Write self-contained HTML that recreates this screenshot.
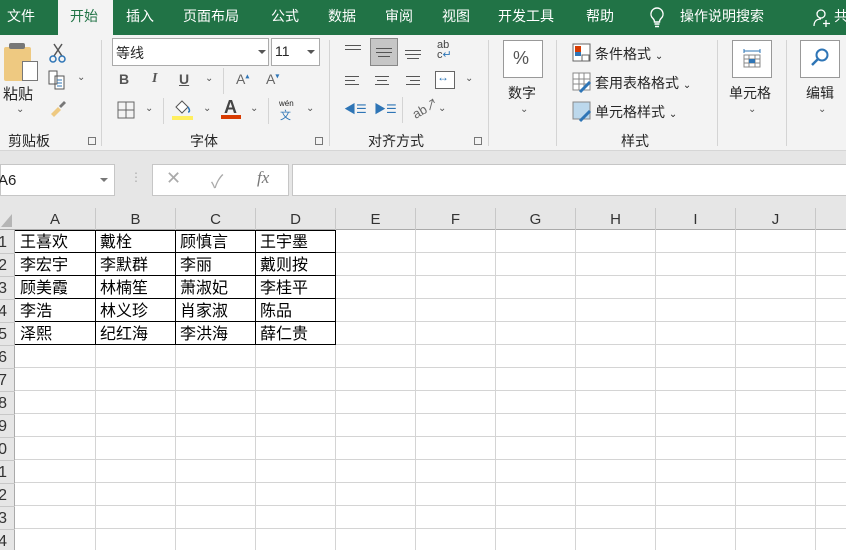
<!DOCTYPE html>
<html><head><meta charset="utf-8"><style>
*{margin:0;padding:0;box-sizing:border-box}
body{width:846px;height:550px;overflow:hidden;position:relative;background:#fff;font-family:"Liberation Sans","Noto Sans CJK SC",sans-serif;color:#262626}
.a{position:absolute}
.tab{position:absolute;top:0;height:35px;line-height:32px;color:#fff;font-size:14px}
.t{position:absolute;font-size:14px;white-space:nowrap}
.vs{position:absolute;width:1px;background:#d4d4d4}
.car{position:absolute;font-size:10px;color:#555}
.line{position:absolute;height:1px;background:#555}
.ch{position:absolute;top:208px;height:22px;font-size:15px;text-align:center;line-height:24px;color:#333;border-right:1px solid #c8c8c8}
.cell{position:absolute;font-size:16px;line-height:22px;color:#000}
</style></head><body>
<div class="a" style="left:0;top:0;width:846px;height:35px;background:#217346"></div>
<div class="a" style="left:58px;top:0;width:55px;height:35px;background:#f3f3f3"></div>
<div class="tab" style="left:7px">文件</div>
<div class="tab" style="left:70px;color:#217346">开始</div>
<div class="tab" style="left:126px">插入</div>
<div class="tab" style="left:183px">页面布局</div>
<div class="tab" style="left:271px">公式</div>
<div class="tab" style="left:328px">数据</div>
<div class="tab" style="left:385px">审阅</div>
<div class="tab" style="left:442px">视图</div>
<div class="tab" style="left:498px">开发工具</div>
<div class="tab" style="left:586px">帮助</div>
<svg class="a" style="left:648px;top:6px" width="18" height="22"><path d="M9 2a6 6 0 0 0-4 10.5c1 1 1.5 2 1.5 3.5h5c0-1.5.5-2.5 1.5-3.5A6 6 0 0 0 9 2zM6.5 18h5M7 20.5h4" stroke="#fff" stroke-width="1.4" fill="none"/></svg>
<div class="tab" style="left:680px">操作说明搜索</div>
<svg class="a" style="left:813px;top:8px" width="20" height="20"><circle cx="8" cy="6" r="4" stroke="#fff" fill="none" stroke-width="1.3"/><path d="M1 18c0-5 3-7 7-7M13 12v7M10 15.5h7" stroke="#fff" fill="none" stroke-width="1.3"/></svg>
<div class="tab" style="left:834px">共</div>
<div class="a" style="left:0;top:35px;width:846px;height:116px;background:#f3f3f3;border-bottom:1px solid #d6d6d6"></div>
<div class="a" style="left:4px;top:47px;width:27px;height:34px;background:#eec981;border-radius:2px"></div>
<div class="a" style="left:9px;top:43px;width:16px;height:6px;background:#777;border-radius:2px"></div>
<div class="a" style="left:22px;top:61px;width:16px;height:20px;background:#fff;border:1px solid #777"></div>
<div class="t" style="left:3px;top:83px;font-size:15px">粘贴</div>
<div class="car" style="left:16px;top:104px">⌄</div>
<svg class="a" style="left:48px;top:42px" width="20" height="22"><path d="M6 2l8 12M14 2L6 14" stroke="#555" stroke-width="1.5"/><circle cx="5" cy="17" r="3" stroke="#2e75b6" fill="none" stroke-width="1.5"/><circle cx="14" cy="17" r="3" stroke="#2e75b6" fill="none" stroke-width="1.5"/></svg>
<svg class="a" style="left:48px;top:70px" width="20" height="20"><path d="M1 1h8v13H1zM7 6h9v13H7z" stroke="#555" fill="#fff"/><path d="M9 10h5M9 13h5M9 16h5" stroke="#2e75b6"/></svg>
<div class="car" style="left:77px;top:72px">⌄</div>
<svg class="a" style="left:48px;top:98px" width="20" height="20"><path d="M3 16l7-7 3 3-7 7z" fill="#eec981"/><path d="M11 8l5-5 2 2-5 5z" fill="#777"/></svg>
<div class="t" style="left:8px;top:131px">剪贴板</div>
<div class="a" style="left:88px;top:137px;width:8px;height:8px;border:1px solid #777"></div>
<div class="vs" style="left:101px;top:40px;height:106px"></div>
<div class="a" style="left:112px;top:38px;width:157px;height:28px;background:#fff;border:1px solid #aaa"></div>
<div class="t" style="left:116px;top:43px">等线</div>
<div class="a" style="left:258px;top:50px;border:4px solid transparent;border-top:4px solid #555"></div>
<div class="a" style="left:271px;top:38px;width:49px;height:28px;background:#fff;border:1px solid #aaa"></div>
<div class="t" style="left:275px;top:43px">11</div>
<div class="a" style="left:307px;top:50px;border:4px solid transparent;border-top:4px solid #555"></div>
<div class="t" style="left:119px;top:71px;font-weight:bold;color:#555">B</div>
<div class="t" style="left:152px;top:71px;font-style:italic;font-weight:bold;color:#555;font-family:'Liberation Serif'">I</div>
<div class="t" style="left:179px;top:71px;font-weight:bold;color:#555;text-decoration:underline">U</div>
<div class="car" style="left:205px;top:73px">⌄</div>
<div class="vs" style="left:223px;top:68px;height:26px"></div>
<div class="t" style="left:236px;top:71px;color:#666">A<sup style="font-size:8px;color:#2e75b6">▴</sup></div>
<div class="t" style="left:266px;top:71px;color:#666">A<sup style="font-size:8px;color:#2e75b6">▾</sup></div>
<svg class="a" style="left:117px;top:101px" width="18" height="18"><path d="M1 1h16v16H1zM9 1v16M1 9h16" stroke="#666" fill="none"/></svg>
<div class="car" style="left:145px;top:103px">⌄</div>
<div class="vs" style="left:163px;top:98px;height:26px"></div>
<svg class="a" style="left:172px;top:99px" width="22" height="22"><path d="M4 8l6-6 6 6-6 6z" stroke="#555" fill="#fff"/><path d="M16 8c2 3 2 5 0 5" stroke="#2e75b6" fill="none" stroke-width="1.5"/><rect x="0" y="17" width="21" height="4" fill="#ffef5f"/></svg>
<div class="car" style="left:203px;top:103px">⌄</div>
<div class="t" style="left:224px;top:97px;font-size:18px;color:#444;font-weight:bold">A</div>
<div class="a" style="left:221px;top:115px;width:20px;height:4px;background:#d83b01"></div>
<div class="car" style="left:250px;top:103px">⌄</div>
<div class="vs" style="left:268px;top:98px;height:26px"></div>
<div class="t" style="left:279px;top:99px;font-size:8px">wén</div>
<div class="t" style="left:280px;top:107px;font-size:11px;color:#2e75b6">文</div>
<div class="car" style="left:306px;top:103px">⌄</div>
<div class="t" style="left:190px;top:131px">字体</div>
<div class="a" style="left:315px;top:137px;width:8px;height:8px;border:1px solid #777"></div>
<div class="vs" style="left:329px;top:40px;height:106px"></div>
<div class="line" style="left:345px;top:45px;width:16px"></div><div class="line" style="left:345px;top:49px;width:16px"></div>
<div class="a" style="left:370px;top:38px;width:28px;height:28px;background:#c6c6c6;border:1px solid #888"></div>
<div class="line" style="left:376px;top:48px;width:16px"></div><div class="line" style="left:376px;top:52px;width:16px"></div><div class="line" style="left:378px;top:56px;width:12px"></div>
<div class="line" style="left:405px;top:50px;width:16px"></div><div class="line" style="left:405px;top:54px;width:16px"></div><div class="line" style="left:407px;top:58px;width:12px"></div>
<div class="t" style="left:437px;top:40px;font-size:11px;line-height:10px;color:#444">ab<br>c<span style="color:#2e75b6">↵</span></div>
<div class="line" style="left:345px;top:76px;width:14px"></div><div class="line" style="left:345px;top:80px;width:10px"></div><div class="line" style="left:345px;top:84px;width:14px"></div>
<div class="line" style="left:375px;top:76px;width:14px"></div><div class="line" style="left:377px;top:80px;width:10px"></div><div class="line" style="left:375px;top:84px;width:14px"></div>
<div class="line" style="left:406px;top:76px;width:14px"></div><div class="line" style="left:410px;top:80px;width:10px"></div><div class="line" style="left:406px;top:84px;width:14px"></div>
<div class="a" style="left:435px;top:71px;width:20px;height:18px;border:1px solid #666;background:#fff"></div>
<div class="t" style="left:437px;top:70px;font-size:12px;color:#2e75b6">↔</div>
<div class="car" style="left:465px;top:73px">⌄</div>
<div class="t" style="left:344px;top:100px;color:#2e75b6;font-size:12px">◀☰</div>
<div class="t" style="left:374px;top:100px;color:#2e75b6;font-size:12px">▶☰</div>
<div class="vs" style="left:402px;top:97px;height:26px"></div>
<div class="t" style="left:411px;top:98px;color:#666;font-size:13px;transform:rotate(-30deg)">ab↗</div>
<div class="car" style="left:438px;top:103px">⌄</div>
<div class="t" style="left:368px;top:131px">对齐方式</div>
<div class="a" style="left:474px;top:137px;width:8px;height:8px;border:1px solid #777"></div>
<div class="vs" style="left:488px;top:40px;height:106px"></div>
<div class="a" style="left:503px;top:40px;width:40px;height:38px;background:#fff;border:1px solid #999"></div>
<div class="t" style="left:513px;top:48px;font-size:18px;color:#555">%</div>
<div class="t" style="left:508px;top:83px">数字</div>
<div class="car" style="left:520px;top:104px">⌄</div>
<div class="vs" style="left:556px;top:40px;height:106px"></div>
<svg class="a" style="left:572px;top:43px" width="20" height="20"><path d="M1 1h17v17H1z" stroke="#666" fill="#fff"/><rect x="3" y="3" width="6" height="6" fill="#d83b01"/><rect x="3" y="9" width="6" height="4" fill="#2e75b6"/><path d="M10 12h7v6h-7z" stroke="#666" fill="#fff"/></svg>
<div class="t" style="left:595px;top:44px">条件格式 <span style="font-size:10px">⌄</span></div>
<svg class="a" style="left:572px;top:72px" width="22" height="22"><path d="M1 1h17v17H1zM1 7h17M1 12h17M7 1v17M12 1v17" stroke="#888" fill="#fff"/><path d="M8 20l10-10" stroke="#2e75b6" stroke-width="3"/></svg>
<div class="t" style="left:595px;top:73px">套用表格格式 <span style="font-size:10px">⌄</span></div>
<svg class="a" style="left:572px;top:101px" width="22" height="22"><path d="M1 1h17v17H1z" stroke="#888" fill="#bcd8ec"/><path d="M8 20l10-10" stroke="#2e75b6" stroke-width="3"/></svg>
<div class="t" style="left:595px;top:102px">单元格样式 <span style="font-size:10px">⌄</span></div>
<div class="t" style="left:621px;top:131px">样式</div>
<div class="vs" style="left:717px;top:40px;height:106px"></div>
<div class="a" style="left:732px;top:40px;width:40px;height:38px;background:#fff;border:1px solid #999"></div>
<svg class="a" style="left:742px;top:48px" width="20" height="22"><path d="M2 3h16M2 1v4M18 1v4" stroke="#2e75b6"/><path d="M2 7h16v12H2zM2 11h16M2 15h16M7 7v12M13 7v12" stroke="#888" fill="#fff"/><rect x="7" y="11" width="6" height="4" fill="#2e75b6"/></svg>
<div class="t" style="left:729px;top:83px">单元格</div>
<div class="car" style="left:748px;top:104px">⌄</div>
<div class="vs" style="left:786px;top:40px;height:106px"></div>
<div class="a" style="left:800px;top:40px;width:40px;height:38px;background:#fff;border:1px solid #999"></div>
<svg class="a" style="left:809px;top:47px" width="22" height="22"><circle cx="13" cy="8" r="5.5" stroke="#2e75b6" stroke-width="2" fill="none"/><path d="M9 12l-6 6" stroke="#2e75b6" stroke-width="2.5"/></svg>
<div class="t" style="left:806px;top:83px">编辑</div>
<div class="car" style="left:818px;top:104px">⌄</div>
<div class="a" style="left:0;top:151px;width:846px;height:57px;background:#e6e6e6"></div>
<div class="a" style="left:0;top:164px;width:115px;height:32px;background:#fff;border:1px solid #c6c6c6"></div>
<div class="t" style="left:-2px;top:172px;font-size:15px;color:#222">A6</div>
<div class="a" style="left:100px;top:178px;border:4px solid transparent;border-top:4px solid #777"></div>
<div class="t" style="left:130px;top:170px;color:#aaa;font-size:12px">⋮</div>
<div class="a" style="left:152px;top:164px;width:137px;height:32px;background:#fff;border:1px solid #c6c6c6"></div>
<div class="t" style="left:166px;top:168px;color:#aaa;font-size:18px">✕</div>
<div class="t" style="left:211px;top:168px;color:#aaa;font-size:18px">✓</div>
<div class="t" style="left:257px;top:168px;color:#777;font-size:17px;font-style:italic;font-family:'Liberation Serif'">fx</div>
<div class="a" style="left:292px;top:164px;width:560px;height:32px;background:#fff;border:1px solid #c6c6c6"></div>
<div class="a" style="left:0;top:208px;width:846px;height:22px;background:#e6e6e6;border-bottom:1px solid #aaa"></div>
<div class="a" style="left:0;top:230px;width:15px;height:320px;background:#e6e6e6;border-right:1px solid #aaa"></div>
<svg class="a" style="left:0;top:212px" width="14" height="16"><path d="M12 2v13H1z" fill="#b5b5b5"/></svg>
<svg class="a" style="left:15px;top:230px" width="831" height="320">
<g stroke="#d4d4d4" stroke-width="1">
<path d="M80.5 0v320M160.5 0v320M240.5 0v320M320.5 0v320M400.5 0v320M480.5 0v320M560.5 0v320M640.5 0v320M720.5 0v320M800.5 0v320"/>
<path d="M0 22.5h831M0 45.5h831M0 68.5h831M0 91.5h831M0 114.5h831M0 137.5h831M0 160.5h831M0 183.5h831M0 206.5h831M0 229.5h831M0 252.5h831M0 275.5h831M0 298.5h831"/>
</g>
<g stroke="#000" stroke-width="1" fill="none">
<path d="M0 0.5h320.5M0 22.5h320M0 45.5h320M0 68.5h320M0 91.5h320M0 114.5h320.5M80.5 0v115M160.5 0v115M240.5 0v115M320.5 0v115"/>
</g>
</svg>
<div class="ch" style="left:15px;width:81px">A</div>
<div class="ch" style="left:96px;width:80px">B</div>
<div class="ch" style="left:176px;width:80px">C</div>
<div class="ch" style="left:256px;width:80px">D</div>
<div class="ch" style="left:336px;width:80px">E</div>
<div class="ch" style="left:416px;width:80px">F</div>
<div class="ch" style="left:496px;width:80px">G</div>
<div class="ch" style="left:576px;width:80px">H</div>
<div class="ch" style="left:656px;width:80px">I</div>
<div class="ch" style="left:736px;width:80px">J</div>
<div class="a" style="left:0;top:231px;width:15px;height:319px;overflow:hidden">
<div class="a" style="left:-20px;top:0;width:27px;font-size:16px;line-height:23px;color:#333;text-align:right">
<div>1</div><div>2</div><div>3</div><div>4</div><div>5</div><div>6</div><div>7</div><div>8</div><div>9</div><div>10</div><div>11</div><div>12</div><div>13</div><div>14</div></div></div>
<div class="a" style="left:0;top:253px;width:15px;height:1px;background:#c8c8c8;box-shadow:0 23px #c8c8c8,0 46px #c8c8c8,0 69px #c8c8c8,0 92px #c8c8c8,0 115px #c8c8c8,0 138px #c8c8c8,0 161px #c8c8c8,0 184px #c8c8c8,0 207px #c8c8c8,0 230px #c8c8c8,0 253px #c8c8c8,0 276px #c8c8c8"></div>
<div class="cell" style="left:20px;top:232px">王喜欢</div><div class="cell" style="left:100px;top:232px">戴栓</div><div class="cell" style="left:180px;top:232px">顾慎言</div><div class="cell" style="left:260px;top:232px">王宇墨</div>
<div class="cell" style="left:20px;top:255px">李宏宇</div><div class="cell" style="left:100px;top:255px">李默群</div><div class="cell" style="left:180px;top:255px">李丽</div><div class="cell" style="left:260px;top:255px">戴则按</div>
<div class="cell" style="left:20px;top:278px">顾美霞</div><div class="cell" style="left:100px;top:278px">林楠笙</div><div class="cell" style="left:180px;top:278px">萧淑妃</div><div class="cell" style="left:260px;top:278px">李桂平</div>
<div class="cell" style="left:20px;top:301px">李浩</div><div class="cell" style="left:100px;top:301px">林义珍</div><div class="cell" style="left:180px;top:301px">肖家淑</div><div class="cell" style="left:260px;top:301px">陈品</div>
<div class="cell" style="left:20px;top:324px">泽熙</div><div class="cell" style="left:100px;top:324px">纪红海</div><div class="cell" style="left:180px;top:324px">李洪海</div><div class="cell" style="left:260px;top:324px">薛仁贵</div>
</body></html>
